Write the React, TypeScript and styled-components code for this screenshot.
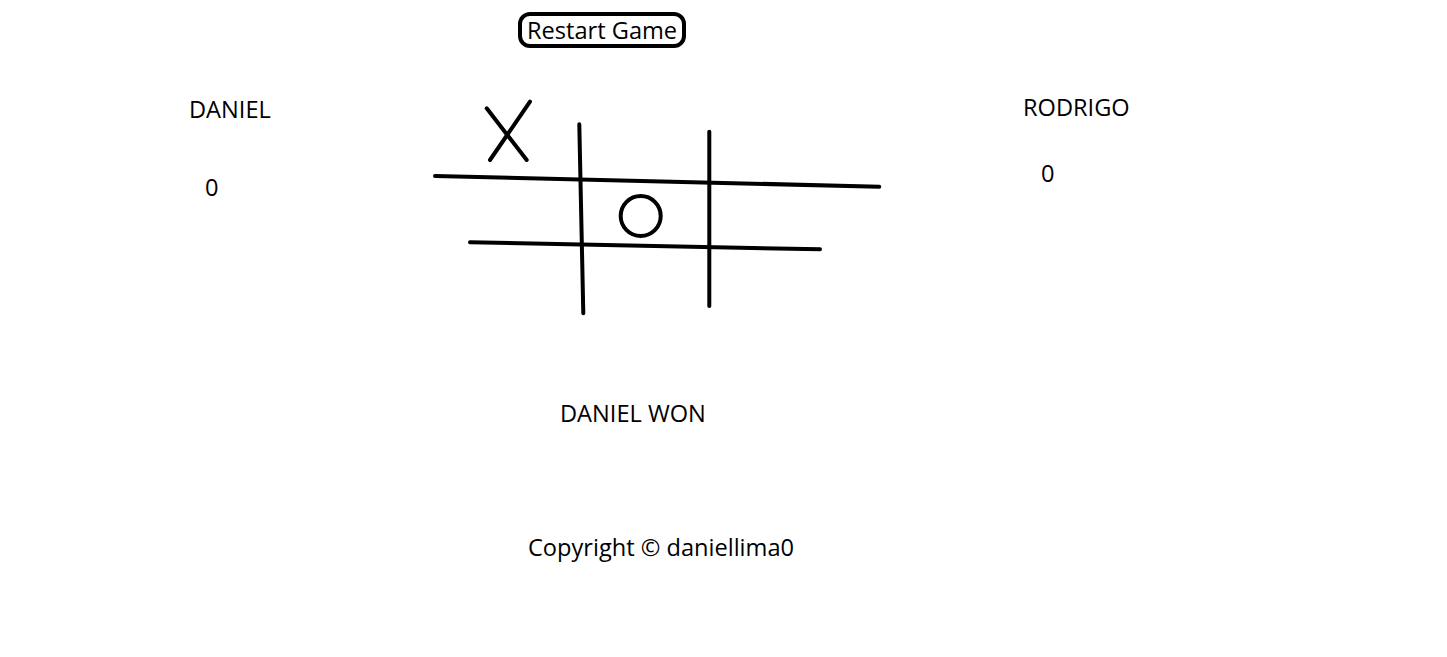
import React from "react";
import styled, { createGlobalStyle } from "styled-components";

const Global = createGlobalStyle`
  html, body { margin: 0; padding: 0; background: #fff; }
  body { font-family: "Open Sans", "Liberation Sans", sans-serif; color: #000; }
`;

const Page = styled.div`
  width: 1447px;
  height: 657px;
  display: flex;
  flex-direction: column;
  padding-top: 12px;
  box-sizing: border-box;
  overflow: hidden;
`;

const TopBar = styled.div`
  display: flex;
  padding-left: 518px;
`;

const RestartButton = styled.button`
  height: 36px;
  box-sizing: border-box;
  border: 4px solid #000;
  border-radius: 12px;
  background: #fff;
  padding: 0 5px;
  font-family: "Open Sans", "Liberation Sans", sans-serif;
  font-size: 23.6px;
  line-height: 26px;
  color: #000;
  cursor: pointer;
`;

const Middle = styled.div`
  display: grid;
  grid-template-columns: 430px 455px 1fr;
  align-items: start;
  margin-top: 43px;
`;

const PlayerColumn = styled.div<{ $pl: number; $pt: number; $gap: number }>`
  display: flex;
  flex-direction: column;
  align-items: flex-start;
  padding-left: ${(p) => p.$pl}px;
  padding-top: ${(p) => p.$pt}px;
  gap: ${(p) => p.$gap}px;
`;

const Label = styled.div<{ $indent?: number }>`
  font-size: 23.6px;
  line-height: 26px;
  padding-left: ${(p) => p.$indent ?? 0}px;
`;

const BoardSvg = styled.svg`
  display: block;
  margin-top: 7px;
`;

const Status = styled.div`
  margin-top: 82px;
  padding-left: 560px;
  font-size: 23.6px;
  line-height: 26px;
`;

const Footer = styled.footer`
  margin-top: 108px;
  padding-left: 528px;
  font-size: 23.6px;
  line-height: 26px;
`;

const Board = () => {
  // origin at page (430, 98)
  const ox = 430;
  const oy = 98;
  const L = (x1: number, y1: number, x2: number, y2: number) => (
    <line x1={x1 - ox} y1={y1 - oy} x2={x2 - ox} y2={y2 - oy} />
  );
  return (
    <BoardSvg width={455} height={220} viewBox="0 0 455 220">
      <g stroke="#000" strokeWidth={4} strokeLinecap="round" fill="none">
        {L(486.7, 108.3, 526.7, 160)}
        {L(530, 101.7, 490, 160)}
        {L(579.3, 124.3, 583.3, 313.3)}
        {L(709.3, 131.7, 709.3, 306)}
        {L(435, 176, 879.3, 186.7)}
        {L(470, 242.3, 820, 249.3)}
        <circle cx={640.7 - ox} cy={216 - oy} r={20} />
      </g>
    </BoardSvg>
  );
};

export default function App() {
  return (
    <Page>
      <Global />
      <TopBar>
        <RestartButton>Restart Game</RestartButton>
      </TopBar>
      <Middle>
        <PlayerColumn $pl={189} $pt={5} $gap={52}>
          <Label>DANIEL</Label>
          <Label $indent={16}>0</Label>
        </PlayerColumn>
        <Board />
        <PlayerColumn $pl={138} $pt={3} $gap={40}>
          <Label>RODRIGO</Label>
          <Label $indent={18}>0</Label>
        </PlayerColumn>
      </Middle>
      <Status>DANIEL WON</Status>
      <Footer>Copyright © daniellima0</Footer>
    </Page>
  );
}
